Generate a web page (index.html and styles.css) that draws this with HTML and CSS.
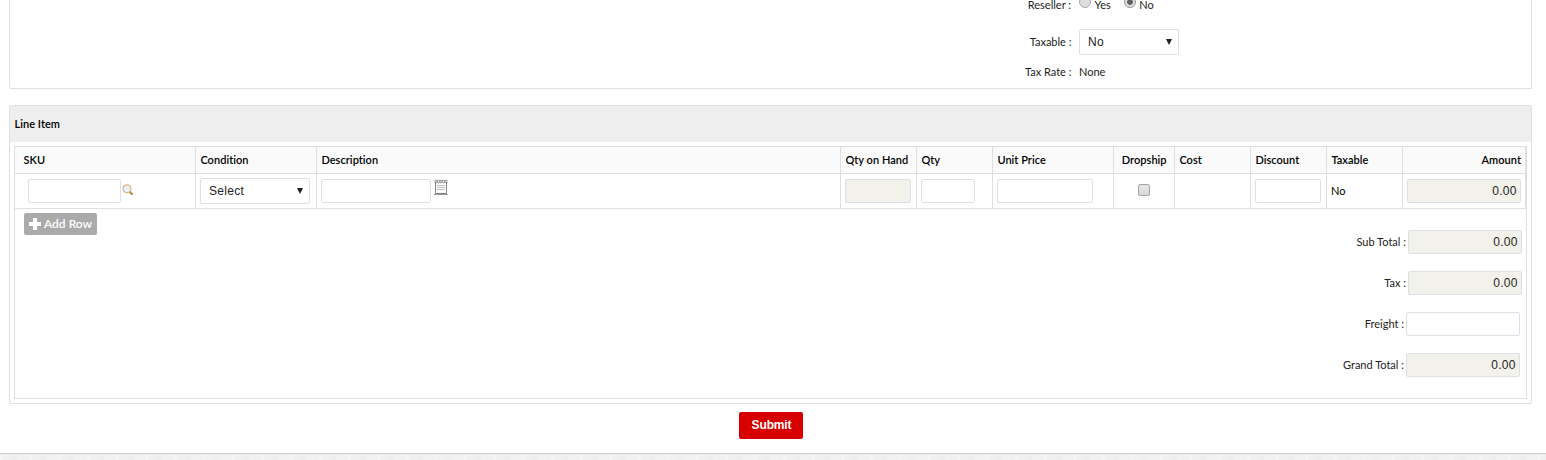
FILE: index.html
```html
<!DOCTYPE html>
<html lang="en">
<head>
<meta charset="utf-8">
<title>Line Item</title>
<link rel="stylesheet" href="styles.css">
</head>
<body>
<main class="page">
  <section class="panel details">
    <div class="field reseller"><span class="label">Reseller :</span>
      <span class="radio"></span><span class="choice">Yes</span>
      <span class="radio on second"></span><span class="choice">No</span></div>
    <div class="field taxable"><span class="label">Taxable :</span><div class="select"><span>No</span><i class="arrow"></i></div></div>
    <div class="field rate"><span class="label">Tax Rate :</span><span>None</span></div>
  </section>
  <section class="panel items">
    <h2 class="title">Line Item</h2>
    <div class="box">
      <div class="row head">
        <div class="cell first">SKU</div><div class="cell">Condition</div><div class="cell">Description</div><div class="cell">Qty on Hand</div><div class="cell">Qty</div><div class="cell">Unit Price</div><div class="cell center">Dropship</div><div class="cell">Cost</div><div class="cell">Discount</div><div class="cell">Taxable</div><div class="cell end">Amount</div>
      </div>
      <div class="row body">
        <div class="cell sku"><div class="input w93"></div>
          <svg class="lens" width="12" height="12" viewBox="0 0 12 12"><path d="M7.500 7.500 9.800 10" stroke="#b98a58" stroke-width="2.400" stroke-linecap="round"/><circle cx="5" cy="4.800" r="3.900" fill="#e6f1f8" stroke="#d9b384" stroke-width="1.300"/></svg></div>
        <div class="cell"><div class="select w110"><span>Select</span><i class="arrow"></i></div></div>
        <div class="cell"><div class="input w110"></div>
          <svg class="note" width="14" height="17" viewBox="0 0 14 17"><path d="M1.500 3v11.500h11V3" fill="#fff" stroke="#858585"/><path d="M0 15.500h14" stroke="#999"/><path d="M3 6.500h8M3 8.500h8M3 10.500h8" stroke="#bbb"/><g fill="none" stroke="#777" stroke-width=".8"><circle cx="2" cy="2.500" r="1.300"/><circle cx="4.500" cy="2.500" r="1.300"/><circle cx="7" cy="2.500" r="1.300"/><circle cx="9.500" cy="2.500" r="1.300"/><circle cx="12" cy="2.500" r="1.300"/></g></svg></div>
        <div class="cell"><div class="input off w66"></div></div>
        <div class="cell"><div class="input w54"></div></div>
        <div class="cell"><div class="input w96"></div></div>
        <div class="cell center"><span class="check"></span></div>
        <div class="cell"></div>
        <div class="cell"><div class="input w66"></div></div>
        <div class="cell">No</div>
        <div class="cell"><div class="input off w114">0.00</div></div>
      </div>
      <div class="foot">
        <div class="add"><svg width="12" height="12" viewBox="0 0 12 12"><path d="M4 0h4v4h4v4H8v4H4V8H0V4h4z" fill="#fff"/></svg><span>Add Row</span></div>
        <div class="totals">
          <div class="total"><span>Sub Total :</span><div class="input off w114">0.00</div></div>
          <div class="total"><span>Tax :</span><div class="input off w114">0.00</div></div>
          <div class="total inset"><span>Freight :</span><div class="input w114"></div></div>
          <div class="total inset"><span>Grand Total :</span><div class="input off w114">0.00</div></div>
        </div>
      </div>
    </div>
  </section>
  <div class="submit">Submit</div>
</main>
<footer class="footer"></footer>
</body>
</html>
```
FILE: styles.css
```css
* { box-sizing: border-box; }
body { margin: 0; height: 460px; overflow: hidden; background: #fff; color: #222; font: 11px/16px Lato, sans-serif; }
.page { height: 453px; display: flex; flex-direction: column; }
.panel { width: 1523px; margin-left: 9px; border: 1px solid #dfdfdf; }
.details { height: 89px; border-top: 0; border-radius: 0 0 2px 2px; padding-left: 1002px; }
.field { display: flex; align-items: center; }
.label { width: 59.5px; margin-right: 7.5px; text-align: right; }
.reseller { height: 16px; margin-top: -3px; }
.reseller .label { width: 59px; margin-right: 8px; }
.radio { width: 12px; height: 12px; margin-top: -6px; border: 1px solid #aaa; border-radius: 50%; background: #dedede; }
.radio.on { border-color: #999; background: radial-gradient(circle, #606060 0 2.5px, #dedede 3.2px); }
.radio.second { margin-left: 13px; }
.choice { margin-left: 3.5px; }
.taxable { height: 26px; margin-top: 16px; }
.rate { height: 16px; margin-top: 9px; }
.select { display: flex; align-items: center; justify-content: space-between; width: 100px; height: 26px; padding: 0 6px 0 8px; border: 1px solid #dbdfe8; border-radius: 2px; background: #fff; color: #222; font: 12px/16px "Liberation Sans", sans-serif; letter-spacing: .3px; }
.arrow { border: solid transparent; border-width: 6px 3px 0; border-top-color: #222; }
.items { height: 299px; margin-top: 16px; border-radius: 2px; }
.title { height: 36px; margin: 0; padding: 0 4.5px; background: #eee; color: #000; font: 600 11px/36px Lato, sans-serif; letter-spacing: .04px; }
.box { width: 1513px; height: 253px; margin: 4px 0 0 4px; border: 1px solid #dfdfdf; }
.row { display: grid; grid-template-columns: 181px 121px 524px 76px 76px 121px 61px 76px 76px 76px 123px; border-bottom: 1px solid #dfdfdf; }
.cell { display: flex; align-items: center; padding: 0 4px; border-right: 1px solid #dfdfdf; color: #000; }
.head { height: 27px; background: #fafafa; font-weight: 600; letter-spacing: .04px; }
.head .cell { padding-left: 4.4px; }
.body { height: 35px; }
.head .first { padding-left: 8.5px; }
.sku { padding-left: 13px; }
.center { justify-content: center; }
.end { justify-content: flex-end; }
.input { height: 24px; padding-right: 3.5px; border: 1px solid #dbdfe8; border-radius: 2px; background: #fff; color: #222; text-align: right; font: 12px/22px "Liberation Sans", sans-serif; letter-spacing: .2px; }
.off { background: #f2f2ea; }
.w54 { width: 54px; }
.w66 { width: 66px; }
.w93 { width: 93px; }
.w96 { width: 96px; }
.w110 { width: 110px; }
.w114 { width: 114px; }
.lens { margin: -2px 0 0 1px; }
.note { margin: -7px 0 0 3px; }
.check { width: 12px; height: 12px; margin-top: -2px; border: 1px solid #a5a5a5; border-radius: 2px; background: linear-gradient(#e6e6e6, #dadada); }
.foot { display: flex; justify-content: space-between; align-items: flex-start; padding: 4px 4px 0 9px; }
.add { display: flex; align-items: center; gap: 3px; width: 73px; height: 22px; padding-left: 5px; border-radius: 2px; background: #aaa; color: #fff; font: 600 12px/22px Lato, sans-serif; }
.totals { display: flex; flex-direction: column; gap: 17px; padding-top: 17px; }
.total { display: flex; align-items: center; justify-content: flex-end; gap: 2px; }
.inset { padding-right: 2px; }
.submit { width: 64px; height: 27px; margin: 8px 0 0 739px; padding-left: 1px; border-radius: 2px; background: #d60000; color: #fff; text-align: center; font: bold 12px/27px "Liberation Sans", sans-serif; letter-spacing: -.15px; }
.footer { height: 7px; border-top: 1px solid #ccc; background: repeating-linear-gradient(90deg, #f4f4f4 0 3px, #f0f0f0 3px 11px, #eee 11px 17px, #f1f1f1 17px 29px); }
```
